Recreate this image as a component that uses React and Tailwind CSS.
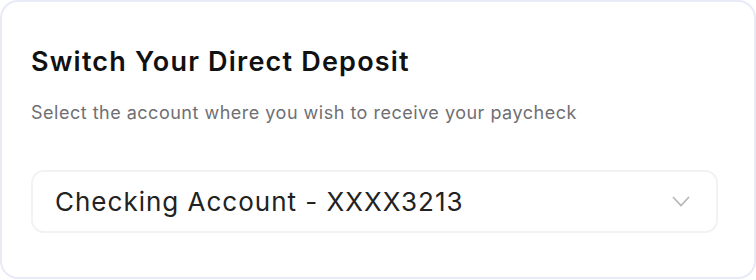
import React from 'react';

const Chevron = () => (
    <svg width="18" height="11" viewBox="0 0 18 11" fill="none" className="shrink-0">
        <path d="M1 1l8 8.5L17 1" stroke="#b5b5b5" strokeWidth="1.6" />
    </svg>
);

const App = () => {
    return (
        <div className="w-[756px] h-[280px] bg-white" style={{ fontFamily: 'Inter, "Noto Sans", sans-serif' }}>
            <div className="h-[279px] rounded-[18px] border-2 border-[#e8eaf7] bg-white px-[29px] pt-[43px]">
                <h1 className="text-[27px] font-semibold leading-[34px] text-[#111] tracking-[1.2px]">
                    Switch Your Direct Deposit
                </h1>
                <p className="mt-[22px] text-[18px] leading-[24px] text-[#6f6f74] tracking-[0.5px]">
                    Select the account where you wish to receive your paycheck
                </p>
                <button className="mt-[45px] flex h-[63px] w-[687px] items-center justify-between rounded-[13px] border-2 border-[#f2f2f3] bg-white pl-[22px] pr-[26px] text-left">
                    <span className="text-[26px] leading-[32px] text-[#222] tracking-[1px]">Checking Account - XXXX3213</span>
                    <Chevron />
                </button>
            </div>
        </div>
    );
};

export default App;
